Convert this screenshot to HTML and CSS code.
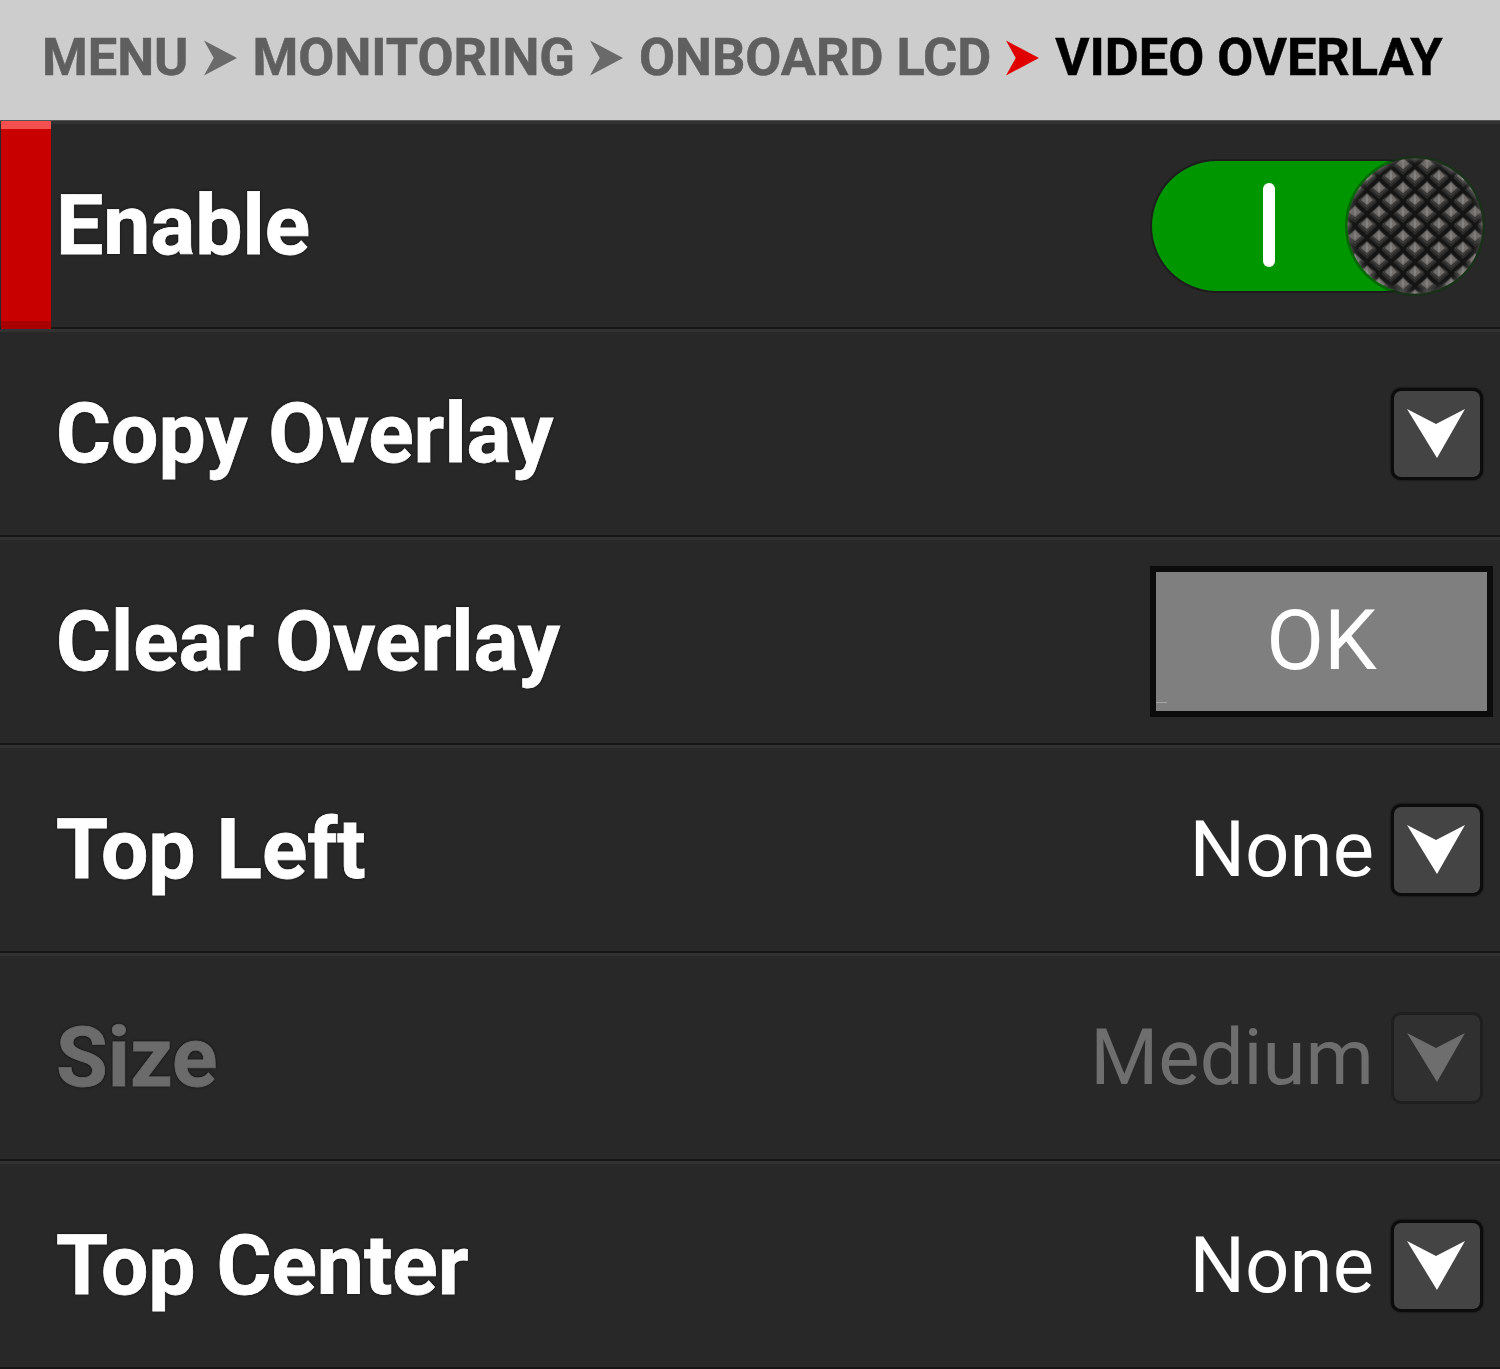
FILE: index.html
```html
<!DOCTYPE html>
<html lang="en">
<head>
  <meta charset="UTF-8">
  <title>Video Overlay</title>
  <link rel="stylesheet" href="styles.css">
</head>
<body>

<svg class="defs" width="0" height="0">
  <defs>
    <symbol id="chev" viewBox="0 0 92 92">
      <polygon points="16,21 45,36 74,21 46,70"/>
    </symbol>
    <symbol id="crumb" viewBox="0 0 34 36">
      <polygon points="0,0 34,18 0,36 10,18"/>
    </symbol>
    <g id="dia">
      <polygon points="-12,0 0,11 12,0 12,5 0,16 -12,5" fill="#141414"/>
      <polygon points="0,-7 9,0 0,8 -9,0" fill="#3c3b3a"/>
      <polygon points="0,-6 6,0 0,5 -6,0" fill="#6f6c69"/>
      <polygon points="0,-6 1.5,0 0,5 -1.5,0" fill="#858280"/>
    </g>
    <pattern id="grip" width="24" height="24" patternUnits="userSpaceOnUse" patternTransform="translate(2 2)">
      <rect width="24" height="24" fill="#2a2a2a"/>
      <use href="#dia" x="12" y="6"/>
      <use href="#dia" x="0" y="18"/>
      <use href="#dia" x="24" y="18"/>
      <use href="#dia" x="12" y="30"/>
      <use href="#dia" x="0" y="-6"/>
      <use href="#dia" x="24" y="-6"/>
    </pattern>
    <radialGradient id="rim" cx="0.5" cy="0.5" r="0.5">
      <stop offset="0.88" stop-color="#000" stop-opacity="0"/>
      <stop offset="1" stop-color="#b0aca8" stop-opacity="0.25"/>
    </radialGradient>
  </defs>
</svg>

<div class="crumbs">
  <span>MENU</span>
  <svg class="crumb-arrow"><use href="#crumb"/></svg>
  <span>MONITORING</span>
  <svg class="crumb-arrow"><use href="#crumb"/></svg>
  <span>ONBOARD LCD</span>
  <svg class="crumb-arrow last"><use href="#crumb"/></svg>
  <span class="current">VIDEO OVERLAY</span>
</div>

<div class="lista">
  <div class="linha ativa">
    <div class="marca"></div>
    <div class="rotulo">Enable</div>
    <svg class="toggle" viewBox="0 0 340 140" width="340" height="140">
      <rect x="1" y="3" width="300" height="134" rx="67" fill="#1d1d1d"/>
      <rect x="3" y="5" width="296" height="130" rx="65" fill="#009600"/>
      <rect x="114" y="27" width="12" height="84" rx="6" fill="#fff"/>
      <circle cx="266" cy="70" r="70" fill="#0a3a0a" opacity="0.5"/>
      <circle cx="266" cy="70" r="67.5" fill="url(#grip)"/>
      <circle cx="266" cy="70" r="67.5" fill="url(#rim)"/>
    </svg>
  </div>

  <div class="linha">
    <div class="rotulo">Copy Overlay</div>
    <div class="caixa"><svg class="chev"><use href="#chev"/></svg></div>
  </div>

  <div class="linha">
    <div class="rotulo">Clear Overlay</div>
    <div class="botao-ok">OK</div>
  </div>

  <div class="linha">
    <div class="rotulo">Top Left</div>
    <div class="valor">None</div>
    <div class="caixa"><svg class="chev"><use href="#chev"/></svg></div>
  </div>

  <div class="linha desativada">
    <div class="rotulo">Size</div>
    <div class="valor">Medium</div>
    <div class="caixa"><svg class="chev"><use href="#chev"/></svg></div>
  </div>

  <div class="linha">
    <div class="rotulo">Top Center</div>
    <div class="valor">None</div>
    <div class="caixa"><svg class="chev"><use href="#chev"/></svg></div>
  </div>
</div>

</body>
</html>
```

FILE: styles.css
```css
html, body {
  margin: 0;
  padding: 0;
}

body {
  width: 1500px;
  height: 1369px;
  overflow: hidden;
  background: #282828;
  font-family: Roboto, "Liberation Sans", sans-serif;
}

.defs {
  position: absolute;
}

.crumbs {
  display: flex;
  align-items: center;
  box-sizing: border-box;
  height: 121px;
  padding: 0 0 7px 42px;
  background: #cdcdcd;
  border-bottom: 1px solid #555;
  font-size: 52.3px;
  font-weight: 700;
  color: #5f5f5f;
  white-space: nowrap;
  -webkit-text-stroke: 0.5px currentColor;
}

.crumb-arrow {
  width: 33px;
  height: 36px;
  margin: 3px 16px 0 15px;
  fill: #6a6a6a;
}

.crumb-arrow.last {
  fill: #e00000;
}

.current {
  color: #000;
}

.linha {
  position: relative;
  display: flex;
  align-items: center;
  box-sizing: border-box;
  height: 208px;
  padding: 0 17px 0 56px;
  background: #282828;
  border-top: 3px solid #323232;
  border-bottom: 2px solid #161616;
}

.marca {
  position: absolute;
  left: 1px;
  top: -3px;
  bottom: -2px;
  width: 50px;
  background: #c80000;
  border-top: 8px solid #f55050;
  border-bottom: 8px solid #a80000;
  box-sizing: border-box;
}

.rotulo {
  flex: 1;
  font-size: 84px;
  font-weight: 700;
  color: #fff;
  text-shadow: 0 0 3px #000;
  -webkit-text-stroke: 0.8px currentColor;
}

.valor {
  margin-right: 17px;
  font-size: 78px;
  color: #fff;
}

.caixa {
  display: flex;
  box-sizing: border-box;
  width: 92px;
  height: 92px;
  background: #444;
  border: 3px solid #0c0c0c;
  border-radius: 10px;
  box-shadow: 0 0 2px #000;
}

.chev {
  width: 92px;
  height: 92px;
  margin: -3px;
  fill: #fff;
}

.botao-ok {
  position: relative;
  box-sizing: border-box;
  width: 343px;
  height: 151px;
  margin-right: -10px;
  background: #7f7f7f;
  border: 6px solid #0c0c0c;
  font-size: 84px;
  line-height: 137px;
  text-align: center;
  color: #fff;
}

.botao-ok::after {
  content: "";
  position: absolute;
  left: 0;
  bottom: 8px;
  width: 11px;
  height: 1px;
  background: #a5a5a5;
}

.toggle {
  margin-right: -6px;
}

.desativada .rotulo {
  color: #6b6b6b;
}

.desativada .valor {
  color: #6e6e6e;
}

.desativada .caixa {
  background: #303030;
  border-color: #1f1f1f;
  box-shadow: none;
}

.desativada .chev {
  fill: #6e6e6e;
}
```
